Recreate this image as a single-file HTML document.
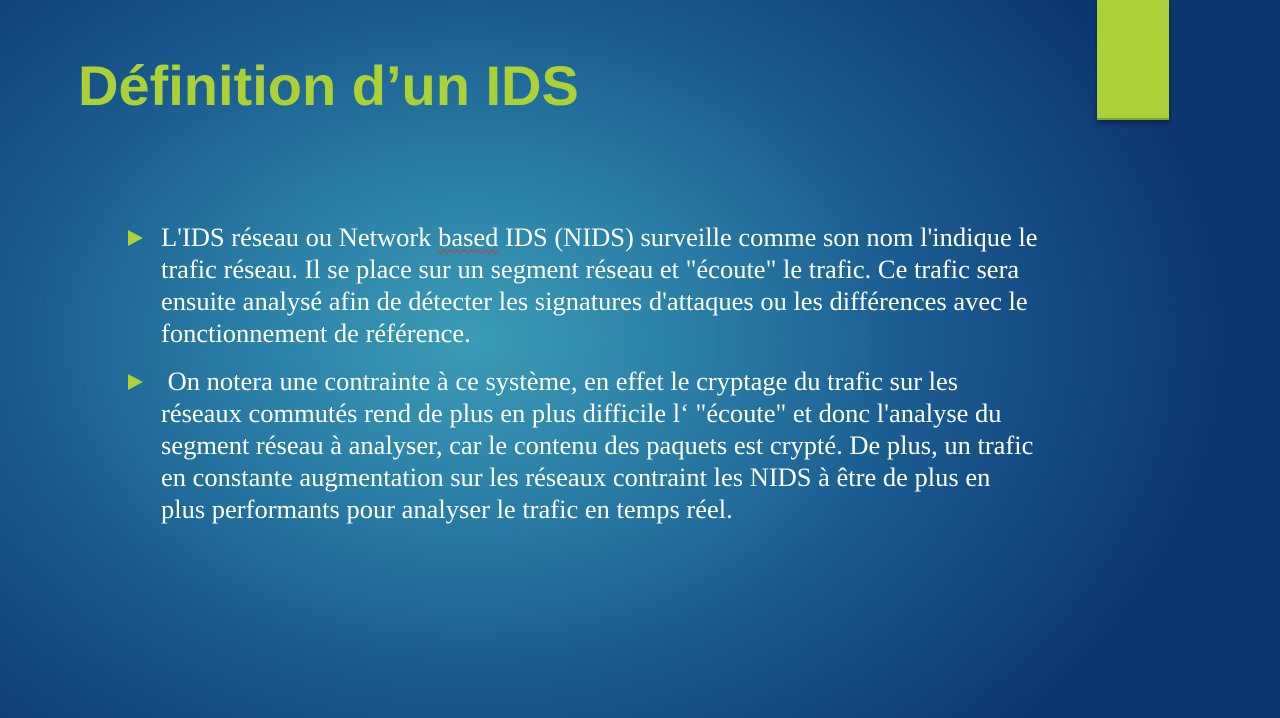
<!DOCTYPE html>
<html><head><meta charset="utf-8"><style>
html,body{margin:0;padding:0}
body{width:1280px;height:718px;overflow:hidden;position:relative;
background:radial-gradient(ellipse 760px 560px at 470px 340px,#3b9cb6 0%,#2a7ea6 30%,#1a5a8f 60%,#12437c 85%,#0e3670 100%);
font-family:"Liberation Serif",serif;}
.bar{position:absolute;left:1097px;top:0;width:72px;height:118px;background:#acd136;border-bottom:2px solid #7fa52a;box-shadow:0 3px 5px rgba(0,0,0,.35)}
h1{position:absolute;left:78px;top:53px;margin:0;font:bold 56px "Liberation Sans",sans-serif;color:#acd136}
.b{position:absolute;left:161px;width:1000px;color:#fff;font-size:26.5px;line-height:32px}
.b:before{content:"";position:absolute;left:-33px;top:9px;border-left:15px solid #acd136;border-top:8px solid transparent;border-bottom:8px solid transparent}
u{text-decoration:underline wavy #d33 1px;text-underline-offset:3px}
</style></head><body>
<div class="bar"></div>
<h1>Définition d’un IDS</h1>
<div class="b" style="top:221px">L'IDS réseau ou Network <u>based</u> IDS (NIDS) surveille comme son nom l'indique le<br>trafic réseau. Il se place sur un segment réseau et "écoute" le trafic. Ce trafic sera<br>ensuite analysé afin de détecter les signatures d'attaques ou les différences avec le<br>fonctionnement de référence.</div>
<div class="b" style="top:365px">&nbsp;On notera une contrainte à ce système, en effet le cryptage du trafic sur les<br>réseaux commutés rend de plus en plus difficile l‘ "écoute" et donc l'analyse du<br>segment réseau à analyser, car le contenu des paquets est crypté. De plus, un trafic<br>en constante augmentation sur les réseaux contraint les NIDS à être de plus en<br>plus performants pour analyser le trafic en temps réel.</div>
</body></html>
